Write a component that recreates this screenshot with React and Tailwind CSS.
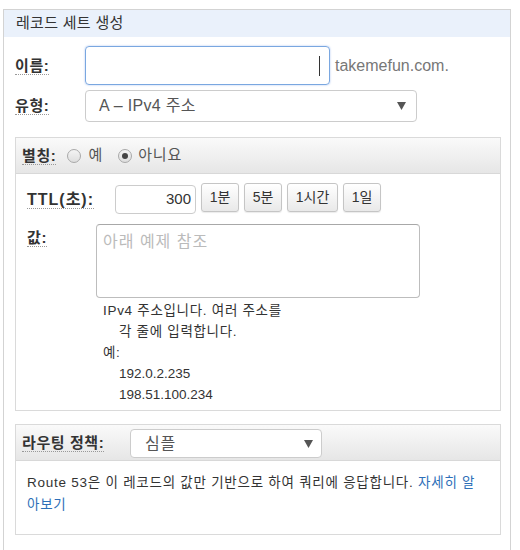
import React from "react";

const font = { fontFamily: '"Liberation Sans", "Noto Sans CJK KR", Arial, sans-serif' };

function Arrow() {
  return (
    <svg width="9" height="8" viewBox="0 0 9 8" className="shrink-0">
      <path d="M0 0 H9 L4.5 8 Z" fill="#555" />
    </svg>
  );
}

function Label({ children, extra = "text-[15px] tracking-[0.6px]" }) {
  return (
    <span className={`font-bold ${extra} text-[#333] border-b border-dotted border-[#999] leading-[17px]`}>
      {children}
    </span>
  );
}

function Radio({ checked }) {
  return (
    <span className="w-[14px] h-[14px] rounded-full border border-[#a9a9a9] bg-gradient-to-b from-[#f4f4f4] to-[#dedede] flex items-center justify-center shrink-0">
      {checked && <span className="w-[6px] h-[6px] rounded-full bg-[#444]" />}
    </span>
  );
}

function Btn({ children, w }) {
  return (
    <div
      className={`${w} h-[29px] border border-[#c5c5c5] rounded-[3px] bg-gradient-to-b from-white to-[#e9e9e9] flex items-center justify-center text-[14px] text-[#333] shadow-[0_1px_1px_rgba(0,0,0,0.08)]`}
    >
      {children}
    </div>
  );
}

export default function App() {
  return (
    <div className="w-[520px] h-[550px] overflow-hidden bg-white pt-[9px] pl-[3px]" style={font}>
      <div className="w-[508px] h-[560px] border-t border-l border-r border-[#d3d3d3]">
        <div className="h-[27px] bg-[#eaf1fb] flex items-center pl-[12px] text-[15px] text-[#333] tracking-[0.3px]">
          레코드 세트 생성
        </div>

        <div className="flex items-center mt-[9px]">
          <div className="w-[81px] pl-[11px] flex">
            <Label>이름:</Label>
          </div>
          <div className="w-[245px] h-[39px] border border-[#7aa7e0] rounded-[4px] flex items-center justify-end pr-[9px] shadow-[0_0_2px_rgba(102,150,230,0.6)]">
            <span className="w-[1px] h-[20px] bg-[#333]" />
          </div>
          <span className="ml-[5px] text-[16px] text-[#777]">takemefun.com.</span>
        </div>

        <div className="flex items-center mt-[5px]">
          <div className="w-[81px] pl-[11px] flex">
            <Label>유형:</Label>
          </div>
          <div className="w-[332px] h-[32px] border border-[#ccc] rounded-[4px] flex items-center justify-between pl-[13px] pr-[10px] text-[16px] text-[#555] tracking-[0.3px]">
            <span>A – IPv4 주소</span>
            <Arrow />
          </div>
        </div>

        <div className="ml-[11px] mt-[15px] w-[486px] h-[274px] border border-[#dadada]">
          <div className="h-[36px] border-b border-[#d8d8d8] bg-gradient-to-b from-[#fafafa] to-[#e6e6e6] flex items-center pl-[6px]">
            <Label>별칭:</Label>
            <div className="flex items-center ml-[11px]">
              <Radio />
              <span className="ml-[7px] text-[15px] text-[#555]">예</span>
            </div>
            <div className="flex items-center ml-[16px]">
              <Radio checked />
              <span className="ml-[6px] text-[15px] text-[#555] tracking-[0.8px]">아니요</span>
            </div>
          </div>

          <div className="flex items-start mt-[9px]">
            <div className="w-[99px] pl-[11px] flex pt-[8px]">
              <Label extra="text-[16px] tracking-[1px]">TTL(초):</Label>
            </div>
            <div className="w-[81px] h-[29px] mt-[2px] border border-[#ccc] rounded-[4px] flex items-center justify-end pr-[4px] text-[15px] text-[#333]">
              300
            </div>
            <div className="flex gap-[5px] ml-[5px]">
              <Btn w="w-[38px]">1분</Btn>
              <Btn w="w-[38px]">5분</Btn>
              <Btn w="w-[51px]">1시간</Btn>
              <Btn w="w-[38px]">1일</Btn>
            </div>
          </div>

          <div className="flex items-start mt-[10px]">
            <div className="w-[80px] pl-[11px] flex pt-[5px]">
              <Label>값:</Label>
            </div>
            <div className="flex flex-col">
              <div className="w-[324px] h-[74px] border border-[#bdbdbd] border-t-[#a8a8a8] rounded-[4px] pl-[6px] pt-[6px] text-[16px] text-[#bbb] leading-[22px] tracking-[1px]">
                아래 예제 참조
              </div>
              <div className="mt-[2px] pl-[7px] text-[13.5px] text-[#333] leading-[21px] tracking-[0.7px]">
                <div>IPv4 주소입니다. 여러 주소를</div>
                <div className="pl-[16px]">각 줄에 입력합니다.</div>
                <div>예:</div>
                <div className="pl-[16px] tracking-normal">192.0.2.235</div>
                <div className="pl-[16px] tracking-normal">198.51.100.234</div>
              </div>
            </div>
          </div>
        </div>

        <div className="ml-[11px] mt-[13px] w-[486px] h-[111px] border border-[#dadada]">
          <div className="h-[36px] border-b border-[#d8d8d8] bg-gradient-to-b from-[#fafafa] to-[#e6e6e6] flex items-center">
            <div className="w-[114px] pl-[6px] flex">
              <Label>라우팅 정책:</Label>
            </div>
            <div className="w-[192px] h-[29px] mt-[2px] bg-white border border-[#ccc] rounded-[4px] flex items-center justify-between pl-[14px] pr-[8px] text-[16px] text-[#555] tracking-[0.8px]">
              <span>심플</span>
              <Arrow />
            </div>
          </div>
          <div className="pl-[11px] pr-[2px] pt-[11px] text-[13.5px] leading-[22px] text-[#333] tracking-[0.75px] whitespace-nowrap">
            Route 53은 이 레코드의 값만 기반으로 하여 쿼리에 응답합니다.{" "}
            <span className="text-[#2e6fb8]">
              자세히 알
              <br />
              아보기
            </span>
          </div>
        </div>
      </div>
    </div>
  );
}
